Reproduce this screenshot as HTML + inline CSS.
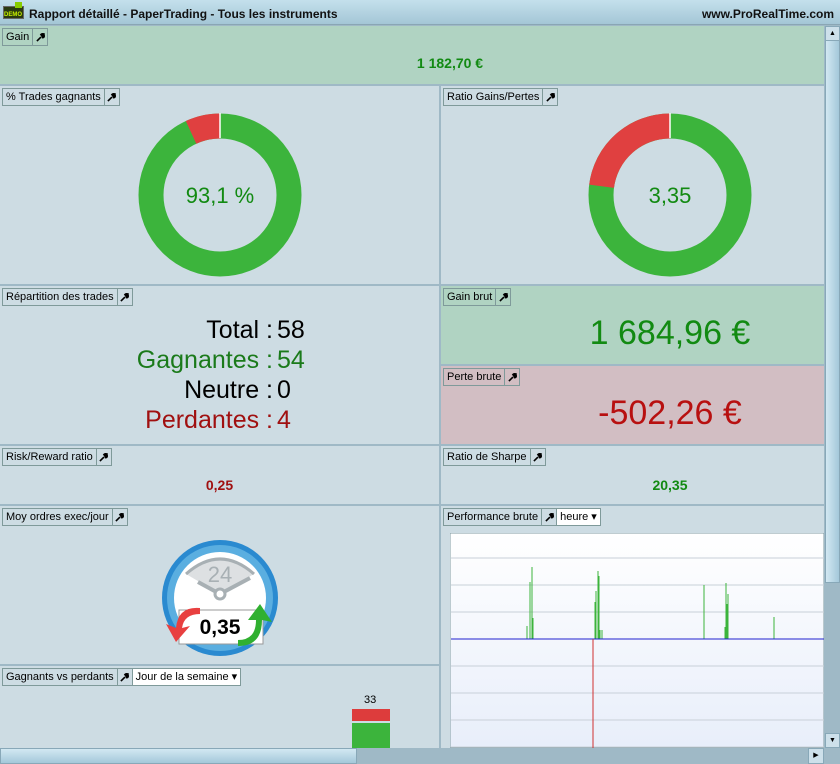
<!DOCTYPE html>
<html><head><meta charset="utf-8"><style>
*{box-sizing:border-box;margin:0;padding:0}
body{width:840px;height:764px;position:relative;overflow:hidden;background:#9fb9c6;font-family:"Liberation Sans",Arial,sans-serif}
.p{position:absolute;background:#cddce3}
.lab{position:absolute;left:2px;top:2px;height:18px;border:1px solid #7f9a9a;display:flex;font-size:11px;color:#000;background:transparent}
.lab span{padding:2px 3px 0 3px;line-height:13px}
.lab i{border-left:1px solid #7f9a9a;width:15px;display:flex;align-items:center;justify-content:center}
.dd{border-left:1px solid #7f9a9a;background:#fff;padding:2px 4px 0 4px;line-height:13px}
.abs{position:absolute}
</style></head><body>
<svg width="0" height="0" style="position:absolute"><defs><symbol id="w" viewBox="0 0 10 10"><path d="M1 9 L5.5 4.5 M5 2.5 Q6 0.5 8.5 1 L7 3 L7.5 3.8 L9 2.5 Q9.5 5 7.5 5.2 L6.5 5" stroke="#000" stroke-width="1.8" fill="#000"/></symbol></defs></svg>
<div class="abs" style="left:0;top:0;width:840px;height:25px;background:linear-gradient(#c4e0ec,#a4c6d6);border-bottom:1px solid #8aa6b4"></div>
<div class="abs" style="left:3px;top:6px;width:21px;height:13px;background:#2a3a10;border:1px solid #666"></div>
<div class="abs" style="left:4px;top:12px;font-size:6px;color:#c8f000;font-weight:bold">DEMO</div>
<div class="abs" style="left:15px;top:2px;width:7px;height:6px;background:#8c0"></div>
<div class="abs" style="left:29px;top:7px;font-size:12px;font-weight:bold;color:#111">Rapport détaillé - PaperTrading - Tous les instruments</div>
<div class="abs" style="right:6px;top:7px;font-size:12px;font-weight:bold;color:#111">www.ProRealTime.com</div>

<div class="p" style="left:0;top:26px;width:824px;height:58px;background:#b0d3c2"><div class="lab"><span>Gain</span><i><svg width="9" height="9"><use href="#w"/></svg></i></div>
<div class="abs" style="left:0;width:900px;top:29px;text-align:center;font-size:14px;font-weight:bold;color:#128a12">1 182,70 €</div></div>

<div class="p" style="left:0;top:86px;width:439px;height:198px"><div class="lab"><span>% Trades gagnants</span><i><svg width="9" height="9"><use href="#w"/></svg></i></div>
<svg class="abs" style="left:0;top:0" width="439" height="198"><circle cx="220" cy="109" r="69" fill="none" stroke="#3cb43c" stroke-width="25"/>
<circle cx="220" cy="109" r="69" fill="none" stroke="#e04040" stroke-width="25" stroke-dasharray="29.9 500" transform="rotate(-114.8 220 109)"/>
<line x1="220" y1="27" x2="220" y2="52" stroke="#fff" stroke-width="1.5"/>
<text x="220" y="117" text-anchor="middle" font-size="22" fill="#128a12" font-family="Liberation Sans">93,1 %</text></svg></div>

<div class="p" style="left:441px;top:86px;width:383px;height:198px"><div class="lab"><span>Ratio Gains/Pertes</span><i><svg width="9" height="9"><use href="#w"/></svg></i></div>
<svg class="abs" style="left:0;top:0" width="383" height="198"><circle cx="229" cy="109" r="69" fill="none" stroke="#3cb43c" stroke-width="25"/>
<circle cx="229" cy="109" r="69" fill="none" stroke="#e04040" stroke-width="25" stroke-dasharray="99.6 500" transform="rotate(-172.7 229 109)"/>
<line x1="229" y1="27" x2="229" y2="52" stroke="#fff" stroke-width="1.5"/>
<text x="229" y="117" text-anchor="middle" font-size="22" fill="#128a12" font-family="Liberation Sans">3,35</text></svg></div>

<div class="p" style="left:0;top:286px;width:439px;height:158px"><div class="lab"><span>Répartition des trades</span><i><svg width="9" height="9"><use href="#w"/></svg></i></div>
<div class="abs" style="right:166px;top:29px;font-size:25px;line-height:30px;text-align:right">
<div style="color:#000">Total :</div><div style="color:#1a7a1a">Gagnantes :</div><div style="color:#000">Neutre :</div><div style="color:#a01010">Perdantes :</div></div>
<div class="abs" style="left:277px;top:29px;font-size:25px;line-height:30px">
<div style="color:#000">58</div><div style="color:#1a7a1a">54</div><div style="color:#000">0</div><div style="color:#a01010">4</div></div></div>

<div class="p" style="left:441px;top:286px;width:383px;height:78px;background:#b0d3c2"><div class="lab"><span>Gain brut</span><i><svg width="9" height="9"><use href="#w"/></svg></i></div>
<div class="abs" style="left:0;width:458px;top:28px;text-align:center;font-size:34px;color:#128a12">1 684,96 €</div></div>
<div class="p" style="left:441px;top:366px;width:383px;height:78px;background:#d2bec3"><div class="lab"><span>Perte brute</span><i><svg width="9" height="9"><use href="#w"/></svg></i></div>
<div class="abs" style="left:0;width:458px;top:28px;text-align:center;font-size:34px;color:#b81010">-502,26 €</div></div>

<div class="p" style="left:0;top:446px;width:439px;height:58px"><div class="lab"><span>Risk/Reward ratio</span><i><svg width="9" height="9"><use href="#w"/></svg></i></div>
<div class="abs" style="left:0;width:439px;top:31px;text-align:center;font-size:14px;font-weight:bold;color:#a01010">0,25</div></div>
<div class="p" style="left:441px;top:446px;width:383px;height:58px"><div class="lab"><span>Ratio de Sharpe</span><i><svg width="9" height="9"><use href="#w"/></svg></i></div>
<div class="abs" style="left:0;width:458px;top:31px;text-align:center;font-size:14px;font-weight:bold;color:#128a12">20,35</div></div>

<div class="p" style="left:0;top:506px;width:439px;height:158px"><div class="lab"><span>Moy ordres exec/jour</span><i><svg width="9" height="9"><use href="#w"/></svg></i></div>
<svg class="abs" style="left:0;top:0" width="439" height="158">
<circle cx="220" cy="92" r="58" fill="#2a8ad0"/><circle cx="220" cy="92" r="53" fill="#5aaee0"/><circle cx="220" cy="92" r="46" fill="#fff"/>
<path d="M186 68 Q220 38 254 68 L220 88 Z" fill="#dde0e2"/>
<path d="M186 68 Q220 38 254 68" fill="none" stroke="#a8b0b4" stroke-width="3"/>
<text x="220" y="76" text-anchor="middle" font-size="22" fill="#a8b0b4" font-family="Liberation Sans">24</text>
<line x1="220" y1="88" x2="198" y2="76" stroke="#a8b0b4" stroke-width="4"/><line x1="220" y1="88" x2="250" y2="72" stroke="#a8b0b4" stroke-width="4"/>
<circle cx="220" cy="88" r="5" fill="#fff" stroke="#a8b0b4" stroke-width="3"/>
<rect x="179" y="104" width="84" height="34" fill="#fff" stroke="#999"/>
<path d="M200 102 Q178 100 176 122 L166 118 L176 136 L190 120 L182 122 Q184 108 200 108 Z" fill="#e84040"/>
<path d="M238 140 Q262 140 262 114 L272 116 L260 98 L248 114 L256 114 Q256 134 238 134 Z" fill="#30b030"/>
<text x="220" y="128" text-anchor="middle" font-size="21" font-weight="bold" fill="#000" font-family="Liberation Sans">0,35</text></svg></div>

<div class="p" style="left:0;top:666px;width:439px;height:82px"><div class="lab"><span>Gagnants vs perdants</span><i><svg width="9" height="9"><use href="#w"/></svg></i><span class="dd">Jour de la semaine ▾</span></div>
<div class="abs" style="left:364px;top:28px;font-size:11px">33</div>
<div class="abs" style="left:352px;top:43px;width:38px;height:12px;background:#dd3c3c"></div>
<div class="abs" style="left:352px;top:57px;width:38px;height:25px;background:#3cb43c"></div></div>

<div class="p" style="left:441px;top:506px;width:383px;height:242px"><div class="lab"><span>Performance brute</span><i><svg width="9" height="9"><use href="#w"/></svg></i><span class="dd">heure ▾</span></div>
<svg class="abs" style="left:9px;top:27px" width="374" height="215"><defs><linearGradient id="g" x1="0" y1="0" x2="0" y2="1"><stop offset="0" stop-color="#fff"/><stop offset="1" stop-color="#e8eefa"/></linearGradient></defs>
<rect x="0" y="0" width="374" height="215" fill="url(#g)" stroke="#7f9aa0"/>
<g stroke="#c8d0d8"><line x1="1" y1="25" x2="374" y2="25"/><line x1="1" y1="52" x2="374" y2="52"/><line x1="1" y1="79" x2="374" y2="79"/><line x1="1" y1="133" x2="374" y2="133"/><line x1="1" y1="160" x2="374" y2="160"/><line x1="1" y1="187" x2="374" y2="187"/><line x1="1" y1="214" x2="374" y2="214"/></g>
<g stroke="#3cb43c" stroke-width="1"><line x1="77" y1="106" x2="77" y2="93"/><line x1="80" y1="106" x2="80" y2="49"/><line x1="82" y1="106" x2="82" y2="34"/><line x1="83" y1="106" x2="83" y2="85"/>
<line x1="145" y1="106" x2="145" y2="69"/><line x1="146" y1="106" x2="146" y2="58"/><line x1="148" y1="106" x2="148" y2="38"/><line x1="149" y1="106" x2="149" y2="43"/><line x1="150" y1="106" x2="150" y2="97"/><line x1="152" y1="106" x2="152" y2="97"/>
<line x1="254" y1="106" x2="254" y2="52"/><line x1="275" y1="106" x2="275" y2="94"/><line x1="276" y1="106" x2="276" y2="50"/><line x1="277" y1="106" x2="277" y2="71"/><line x1="278" y1="106" x2="278" y2="61"/><line x1="324" y1="106" x2="324" y2="84"/></g>
<line x1="1" y1="106" x2="374" y2="106" stroke="#2020d0"/>
<line x1="143" y1="106" x2="143" y2="215" stroke="#d03030"/></svg></div>

<div class="abs" style="left:824px;top:26px;width:16px;height:722px;background:#9fb9c6"></div>
<div class="abs" style="left:825px;top:26px;width:15px;height:557px;background:linear-gradient(90deg,#d2e8f2,#a4c8da);border:1px solid #88a8b8"></div>
<div class="abs" style="left:825px;top:26px;width:15px;height:15px;border:1px solid #88a8b8;background:#cde0ea;font-size:7px;text-align:center;line-height:13px">▲</div>
<div class="abs" style="left:825px;top:733px;width:15px;height:15px;border:1px solid #88a8b8;background:#cde0ea;font-size:7px;text-align:center;line-height:13px">▼</div>
<div class="abs" style="left:0;top:748px;width:840px;height:16px;background:#9fb9c6"></div>
<div class="abs" style="left:0;top:748px;width:357px;height:16px;background:linear-gradient(#d2e8f2,#a4c8da);border:1px solid #88a8b8"></div>
<div class="abs" style="left:808px;top:748px;width:16px;height:16px;border:1px solid #88a8b8;background:#cde0ea;font-size:7px;text-align:center;line-height:14px">▶</div>
</body></html>
